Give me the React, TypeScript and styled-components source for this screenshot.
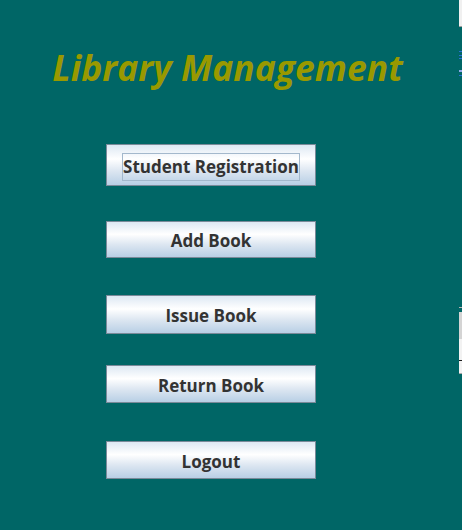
import styled, { createGlobalStyle } from "styled-components";

const menuItems = [
  { title: "Student Registration", top: 54, height: 42, focused: true },
  { title: "Add Book", top: 35, height: 37 },
  { title: "Issue Book", top: 37, height: 39 },
  { title: "Return Book", top: 31, height: 38 },
  { title: "Logout", top: 38, height: 38 },
];

function App() {
  return (
    <>
      <GlobalStyle />
      <Screen>
        <Frame>
          <Title>Library Management</Title>
          <Menu>
            {menuItems.map((item, key) => (
              <MenuButton key={key} $top={item.top} $height={item.height}>
                <Label $focused={!!item.focused}>{item.title}</Label>
              </MenuButton>
            ))}
          </Menu>
        </Frame>
        <BehindWindow>
          <Pane $color="#f0f0f0" $height={26} />
          <Pane $color="#a0a0a0" $height={1} />
          <Pane $color="#006666" $height={24} />
          <Mark $color="#2a6fd6" />
          <Pane $color="#006666" $height={3} />
          <Mark $color="#2a6fd6" />
          <Pane $color="#006666" $height={2} />
          <Mark $color="#2a6fd6" />
          <Pane $color="#006666" $height={11} />
          <Mark $color="#8fa8e8" />
          <Mark $color="#8fa8e8" />
          <Pane $color="#006666" $height={3} />
          <Mark $color="#2a6fd6" />
          <Pane $color="#006666" $height={231} />
          <Pane $color="#b5b5b5" $height={1} />
          <Pane $color="#006666" $height={4} />
          <Pane $color="#d4d4d4" $height={27} />
          <Pane $color="#f2f2f2" $height={21} />
          <Mark $color="#1a1a1a" />
          <Pane $color="#f2f2f2" $height={12} />
          <Pane $color="#a8a8a8" $height={1} />
          <Pane $color="#006666" $height={150} />
        </BehindWindow>
      </Screen>
    </>
  );
}

const GlobalStyle = createGlobalStyle`
  html, body {
    margin: 0;
    padding: 0;
    background: #006666;
  }
`;

const Screen = styled.div`
  display: flex;
  width: 462px;
  height: 530px;
  overflow: hidden;
  background: #006666;
`;

const Frame = styled.div`
  width: 459px;
  display: flex;
  flex-direction: column;
  align-items: flex-start;
`;

const Title = styled.h1`
  margin: 44px 0 0 0;
  width: 455px;
  text-align: center;
  font-family: "Open Sans", sans-serif;
  font-style: italic;
  font-weight: 700;
  font-size: 35.5px;
  line-height: 46px;
  color: #999900;
`;

const Menu = styled.nav`
  display: flex;
  flex-direction: column;
  padding-left: 106px;
`;

const MenuButton = styled.div<{ $top: number; $height: number }>`
  box-sizing: border-box;
  margin-top: ${(p) => p.$top}px;
  width: 210px;
  height: ${(p) => p.$height}px;
  padding-top: 3px;
  display: flex;
  justify-content: center;
  align-items: center;
  border: 1px solid #7a8a99;
  background: linear-gradient(
    to bottom,
    #dde8f3 0%,
    #ffffff 35%,
    #dce6f1 65%,
    #b8cfe5 100%
  );
  font-family: "Open Sans", sans-serif;
  font-weight: 700;
  font-size: 17px;
  color: #333333;
`;

const Label = styled.span<{ $focused: boolean }>`
  padding: 2px 0;
  border: 1px solid ${(p) => (p.$focused ? "#a3b8cc" : "transparent")};
  line-height: 22px;
`;

const BehindWindow = styled.div`
  width: 3px;
  display: flex;
  flex-direction: column;
`;

const Pane = styled.div<{ $color: string; $height: number }>`
  height: ${(p) => p.$height}px;
  background: ${(p) => p.$color};
`;

const Mark = styled.div<{ $color: string }>`
  height: 1px;
  background: ${(p) => p.$color};
`;

export default App;
